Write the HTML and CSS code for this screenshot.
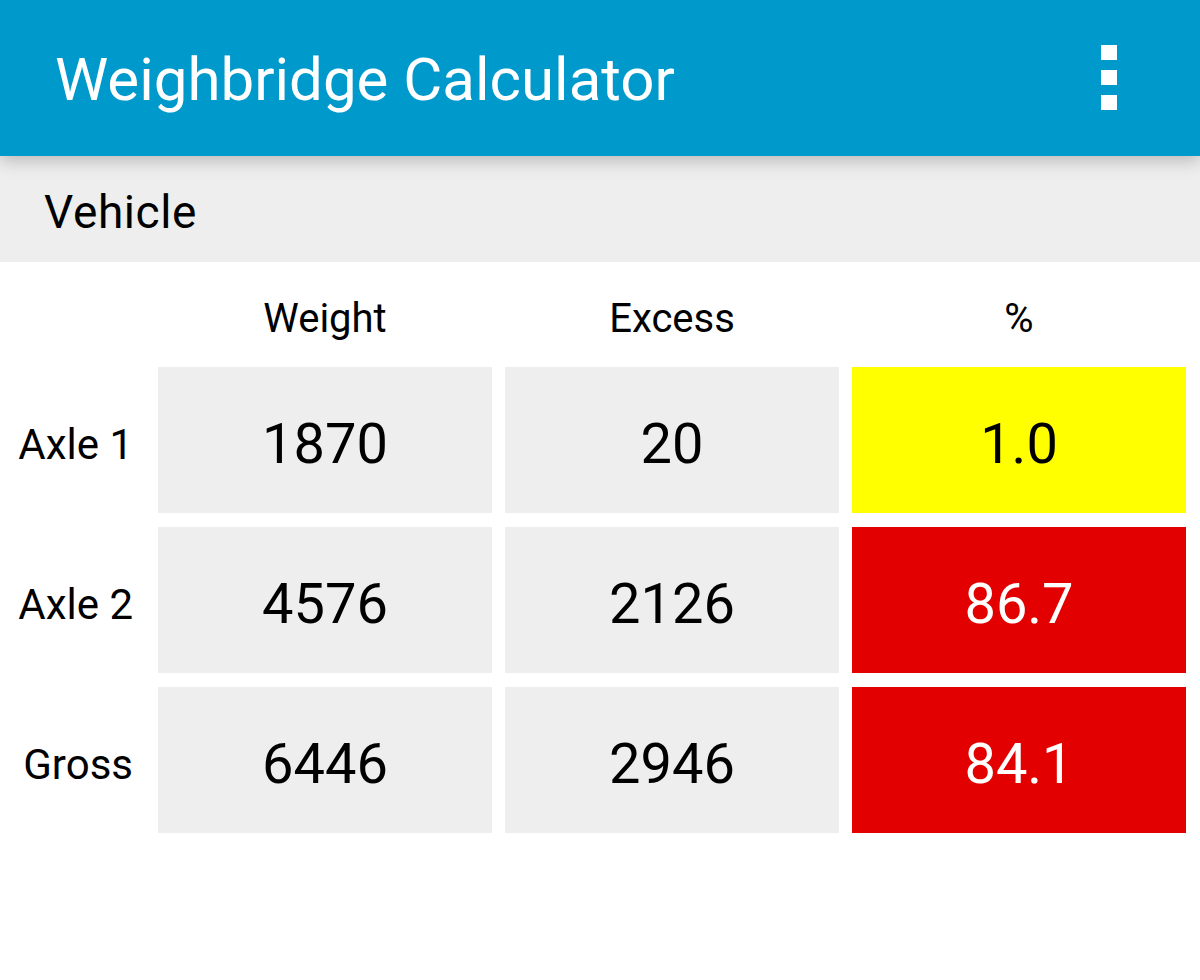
FILE: index.html
```html
<!DOCTYPE html>
<html lang="en">

<head>
    <meta charset="UTF-8">
    <meta name="viewport" content="width=device-width, initial-scale=1.0">
    <title>Weighbridge Calculator</title>
    <link rel="stylesheet" href="styles.css">
</head>

<body>
    <header class="app-bar">
        <h1 class="app-title">Weighbridge Calculator</h1>
        <div class="overflow-menu">
            <span></span>
            <span></span>
            <span></span>
        </div>
    </header>

    <section class="section-bar">
        <h2>Vehicle</h2>
    </section>

    <section class="results">
        <div class="col-head"></div>
        <div class="col-head">Weight</div>
        <div class="col-head">Excess</div>
        <div class="col-head">%</div>

        <div class="row-label">Axle 1</div>
        <div class="cell">1870</div>
        <div class="cell">20</div>
        <div class="cell warn">1.0</div>

        <div class="row-label">Axle 2</div>
        <div class="cell">4576</div>
        <div class="cell">2126</div>
        <div class="cell over">86.7</div>

        <div class="row-label">Gross</div>
        <div class="cell">6446</div>
        <div class="cell">2946</div>
        <div class="cell over">84.1</div>
    </section>
</body>

</html>
```

FILE: styles.css
```css
body {
    margin: 0;
    font-family: Roboto, "Liberation Sans", sans-serif;
    background-color: #fff;
    color: #000;
}

.app-bar {
    position: relative;
    z-index: 1;
    height: 156px;
    background-color: #0099cc;
    display: flex;
    align-items: center;
    justify-content: space-between;
    padding: 0 83px 0 55px;
    box-shadow: 0 5px 16px rgba(0, 0, 0, 0.22);
}

.app-title {
    margin: 0;
    margin-top: 2px;
    color: #fff;
    font-weight: 400;
    font-size: 60px;
}

.overflow-menu {
    display: flex;
    flex-direction: column;
    gap: 10px;
    margin-top: -2px;
}

.overflow-menu span {
    display: block;
    width: 16px;
    height: 15px;
    background-color: #fff;
}

.section-bar {
    height: 106px;
    background-color: #eeeeee;
    display: flex;
    align-items: center;
    padding: 6px 0 0 44px;
    box-sizing: border-box;
}

.section-bar h2 {
    margin: 0;
    font-weight: 400;
    font-size: 46px;
    letter-spacing: 0.6px;
}

.results {
    display: grid;
    grid-template-columns: 145px repeat(3, 1fr);
    grid-template-rows: 91px repeat(3, 146px);
    column-gap: 13px;
    row-gap: 14px;
    padding-right: 14px;
}

.col-head {
    text-align: center;
    font-size: 40px;
    padding-top: 33px;
}

.row-label {
    display: flex;
    align-items: center;
    justify-content: flex-end;
    padding: 8px 12px 0 0;
    font-size: 42px;
}

.cell {
    display: flex;
    align-items: center;
    justify-content: center;
    padding-top: 8px;
    box-sizing: border-box;
    background-color: #eeeeee;
    font-size: 56px;
}

.cell.warn {
    background-color: #ffff00;
}

.cell.over {
    background-color: #e30000;
    color: #fff;
}
```
